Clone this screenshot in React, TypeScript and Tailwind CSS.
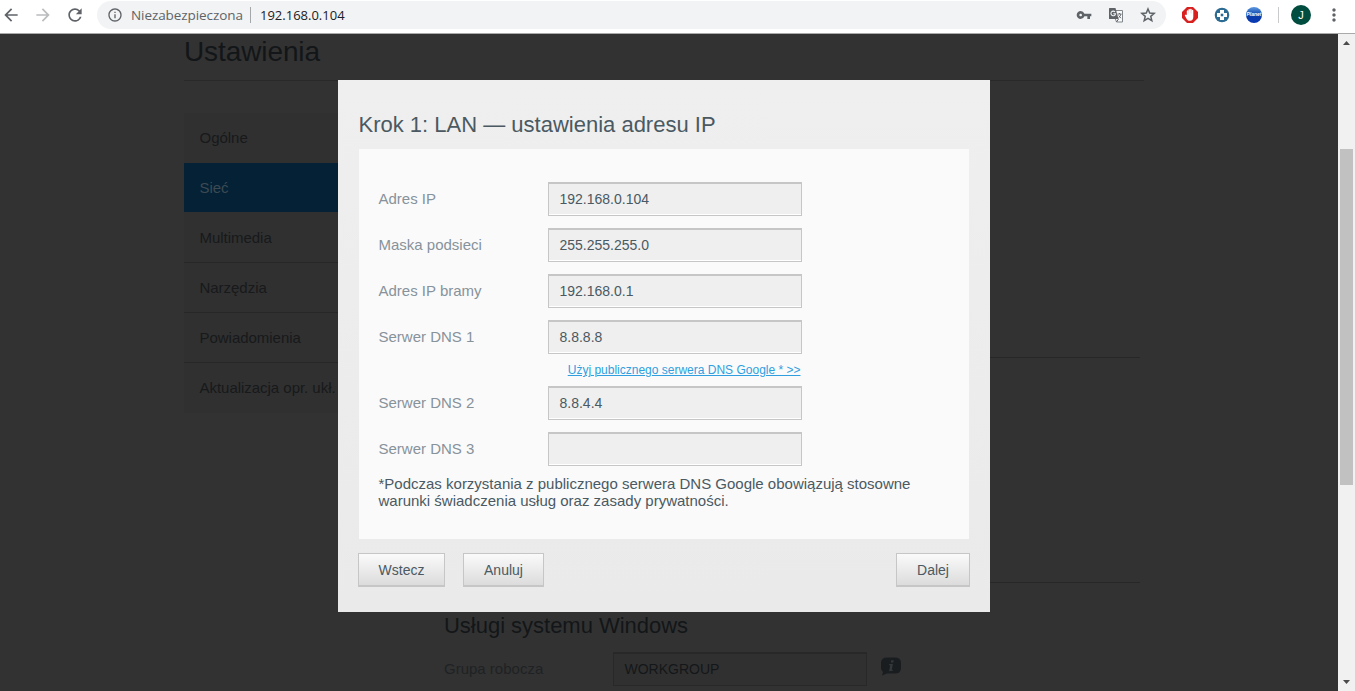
import React from 'react';
import { MdArrowBack, MdArrowForward, MdRefresh, MdInfoOutline, MdVpnKey, MdMoreVert } from 'react-icons/md';

interface Field {
    label: string;
    value: string;
    hint?: string;
}

const fields: Field[] = [
    { label: 'Adres IP', value: '192.168.0.104' },
    { label: 'Maska podsieci', value: '255.255.255.0' },
    { label: 'Adres IP bramy', value: '192.168.0.1' },
    { label: 'Serwer DNS 1', value: '8.8.8.8', hint: 'Użyj publicznego serwera DNS Google * >>' },
    { label: 'Serwer DNS 2', value: '8.8.4.4' },
    { label: 'Serwer DNS 3', value: '' },
];

const menuItems = ['Ogólne', 'Sieć', 'Multimedia', 'Narzędzia', 'Powiadomienia', 'Aktualizacja opr. ukł.'];

const TranslateIcon: React.FC = () => (
    <svg className="ml-4 h-4 w-4" viewBox="0 0 16 16" fill="none">
        <path d="M7 3.500h7.500v11.500H8.500L7 11" fill="#fafafa" stroke="#80868b" />
        <path d="M1.500 1h6l3 11h-9Q1 12 1 11.500v-10Q1 1 1.500 1z" fill="#5f6368" />
        <path d="M7 4.900A2.300 2.300 0 1 0 7.500 6.800H5.300" stroke="#f1f3f4" strokeWidth="1.100" />
        <path d="M9.500 7h4M11.500 6v1M13 7q-.5 2.500-2.700 4M10.600 8.500l2.400 2.700" stroke="#5f6368" strokeWidth=".9" />
        <path d="M8.500 15l2-3" stroke="#5f6368" />
    </svg>
);

const StarIcon: React.FC = () => (
    <svg className="ml-[15px] mr-[9px] h-[18px] w-[18px]" viewBox="0 0 24 24" fill="none">
        <path
            d="M12 4l2.300 5.400 5.900.5-4.500 3.900 1.400 5.800L12 16.500l-5.100 3.100 1.400-5.800-4.500-3.900 5.900-.5z"
            stroke="#5f6368"
            strokeWidth="2"
        />
    </svg>
);

const BrowserBar: React.FC = () => (
    <header className="flex h-[34px] shrink-0 items-center border-b border-[#a9aaa9] bg-white pb-[3px] text-[#5f6368]">
        <MdArrowBack className="ml-[1px] h-5 w-5" />
        <MdArrowForward className="ml-3 h-5 w-5 text-[#babcbe]" />
        <MdRefresh className="ml-3 h-5 w-5" />
        <div className="ml-[12px] flex h-7 w-[1069px] items-center rounded-full bg-[#f1f3f4] pl-[10px] font-['Open_Sans',sans-serif] text-[13.5px]">
            <MdInfoOutline className="h-4 w-4" />
            <span className="ml-2 w-[112px] whitespace-nowrap tracking-[-0.08px]">Niezabezpieczona</span>
            <span className="ml-[7px] h-4 w-px bg-[#a5a8ab]" />
            <span className="ml-[9px] pt-[1px] text-[13px] text-[#202124]">192.168.0.104</span>
            <MdVpnKey className="ml-auto h-4 w-4" />
            <TranslateIcon />
            <StarIcon />
        </div>
        {/* Extensions */}
        <svg className="ml-4 h-4 w-4" viewBox="0 0 16 16">
            <path d="M5 0h6l5 5v6l-5 5H5l-5-5V5z" fill="#d8201f" />
            <path d="M4.800 8V4c0-1 1.500-1 1.500 0v2.500h.1V2.800c0-1.100 1.600-1.100 1.600 0v3.700h.1V2.500c0-1.100 1.600-1.100 1.600 0v4h.1V3.500c0-1 1.500-1 1.500 0v6.300c0 2.500-1.200 4-3.100 4-2.200 0-3-.9-3.800-2.400L2.900 8.800c-.4-1 .8-1.600 1.900-.8z" fill="#fff" />
        </svg>
        <svg className="ml-4 h-4 w-4" viewBox="0 0 16 16">
            <circle cx="8" cy="8" r="7.300" fill="#2d6c92" />
            <path d="M6 3h4v3h3v4h-3v3H6v-3H3V6h3z" fill="#fff" />
            <path d="M6.700 6.700h2.600v2.600H6.700z" fill="#2d6c92" />
        </svg>
        <div className="ml-4 flex h-4 w-4 items-center justify-center overflow-hidden rounded-full bg-linear-to-b from-[#5d9ae0] via-[#0c3ea8] to-[#0838b5]">
            <span className="font-['Liberation_Sans',sans-serif] text-[5px] font-bold italic text-white">Planet</span>
        </div>
        <span className="ml-4 h-4 w-px bg-[#c8cacc]" />
        <div className="ml-3 flex h-5 w-5 items-center justify-center rounded-full bg-[#004d40] font-['Liberation_Sans',sans-serif] text-[11px] text-white">J</div>
        <MdMoreVert className="ml-[13px] h-5 w-5" />
    </header>
);

const SideMenu: React.FC = () => (
    <nav className="h-[300px] w-[220px] shrink-0 bg-[#303030] text-[15px] tracking-[-0.03px]">
        {menuItems.map((item, index) => (
            <div
                key={item}
                className={`flex h-[50px] items-center border-b pl-[15.5px] pt-[2px] ${
                    index === 1
                        ? 'border-[#303030] bg-[#042135] text-[#3c4a53]'
                        : index === 0 || index === 5
                            ? 'border-[#303030] text-[#17191b]'
                            : 'border-[#272727] text-[#17191b]'
                }`}
            >
                {item}
            </div>
        ))}
    </nav>
);

const DialogButton: React.FC<{ label: string; className: string }> = ({ label, className }) => (
    <button
        className={`h-[34px] border border-b-2 border-[#c6c6c6] bg-linear-to-b from-[#fafafa] to-[#dcdcdc] pt-[2px] text-[14px] text-[#4a5962] ${className}`}
    >
        {label}
    </button>
);

const LanDialog: React.FC = () => (
    <div className="absolute left-[338px] top-[46px] h-[532px] w-[652px] bg-linear-to-b from-[#efefef] to-[#eaeaea] px-5 pt-[31px]">
        <h2 className="pl-[0.5px] text-[22px] leading-[28px] text-[#4a5962]">Krok 1: LAN — ustawienia adresu IP</h2>
        <div className="mx-[1px] mt-[10px] h-[390px] bg-[#fafafa] px-[19px] pt-[33px]">
            {fields.map((field) => (
                <div key={field.label} className="flex items-start">
                    <label className="w-[170px] pl-[0.5px] text-[15px] leading-[34px] text-[#87929a]">{field.label}</label>
                    <div className={`w-[254px] ${field.hint ? 'h-[66px]' : 'h-[46px]'}`}>
                        <div className="flex h-[34px] items-center border border-t-2 border-[#c6c6c6] bg-[#efefef] pl-[10.5px] text-[14px] text-[#4a5962] shadow-[inset_0_-1px_0_#fff]">
                            {field.value}
                        </div>
                        {field.hint && (
                            <a className="block pr-[1.5px] pt-2 text-right text-[12px] leading-4 text-[#2f9fe0] underline">{field.hint}</a>
                        )}
                    </div>
                </div>
            ))}
            <p className="-mt-[3px] w-[560px] pl-[0.5px] text-[15px] leading-[17px] text-[#4a5962]">
                *Podczas korzystania z publicznego serwera DNS Google obowiązują stosowne warunki świadczenia usług oraz zasady prywatności.
            </p>
        </div>
        <div className="mt-[14px] flex">
            <DialogButton label="Wstecz" className="w-[87px]" />
            <DialogButton label="Anuluj" className="ml-[18px] w-[81px]" />
            <DialogButton label="Dalej" className="ml-auto w-[74px]" />
        </div>
    </div>
);

const Scrollbar: React.FC = () => (
    <div className="flex w-[17px] shrink-0 flex-col items-center bg-[#f1f1f1]">
        <svg className="mt-[6px] h-[5px] w-[7px]" viewBox="0 0 7 5">
            <path d="M0 5L3.500 1 7 5z" fill="#4b4b4b" />
        </svg>
        <div className="mt-[104px] h-[336px] w-[13px] bg-[#c1c1c1]" />
        <svg className="mb-[6px] mt-auto h-[5px] w-[7px]" viewBox="0 0 7 5">
            <path d="M0 0L3.500 4 7 0z" fill="#4b4b4b" />
        </svg>
    </div>
);

export default function App() {
    return (
        <div className="flex h-screen flex-col overflow-hidden font-['Liberation_Sans',sans-serif]">
            <BrowserBar />
            <div className="relative flex min-h-0 flex-1 bg-[#323232]">
                <main className="min-w-0 flex-1 overflow-hidden pl-[184px]">
                    <h1 className="h-[47px] w-[960px] border-b border-[#292929] text-[28px] leading-[35px] tracking-[-0.1px] text-[#131618]">Ustawienia</h1>
                    <div className="mt-[32px] flex">
                        <SideMenu />
                        <section className="ml-10 w-[696px]">
                            <div className="h-[245px] border-b border-[#272727]" />
                            <div className="h-[225px] border-b border-[#272727]" />
                            <h2 className="pt-[29px] text-[22px] leading-[28px] tracking-[-0.02px] text-[#131618]">Usługi systemu Windows</h2>
                            <div className="mt-[12px] flex text-[#1f2224]">
                                <span className="w-[169px] text-[15px] leading-[34px]">Grupa robocza</span>
                                <div className="flex h-[34px] w-[254px] items-center border border-t-2 border-[#282828] bg-[#303030] pl-[10.5px] text-[14px] text-[#141719]">
                                    WORKGROUP
                                </div>
                                <svg className="ml-[14px] mt-[5px] h-[19px] w-[20px]" viewBox="0 0 20 19">
                                    <path d="M6 .5h8Q20 .5 20 6v5q0 5.500-6 5.500H6L1 18.500l1-3.500Q0 13.500 0 11V6Q0 .5 6 .5z" fill="#191d20" />
                                    <path d="M10.300 3.300h2.400l-.4 2.200H9.900zM8.300 7h3.600l-1.200 6 1.300-.4-.3 1.200-3.600.5 1.200-6.100H8z" fill="#34383a" />
                                </svg>
                            </div>
                        </section>
                    </div>
                </main>
                <Scrollbar />
                <LanDialog />
            </div>
        </div>
    );
}
